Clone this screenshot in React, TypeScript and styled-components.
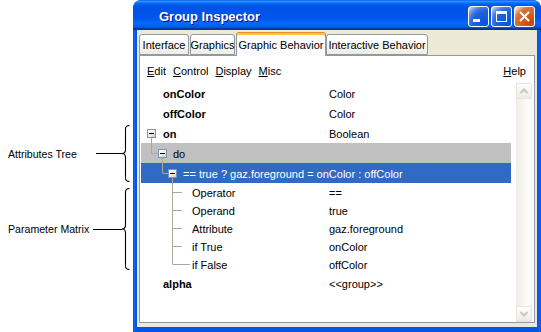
import React from 'react';
import styled, { createGlobalStyle } from 'styled-components';

const GlobalStyle = createGlobalStyle`
  html, body { margin: 0; padding: 0; background: #fff; }
  body { font-family: "Liberation Sans", Arial, sans-serif; font-size: 11px; color: #000; }
  * { box-sizing: border-box; }
`;

const Page = styled.div`
  display: flex;
  width: 541px;
  height: 332px;
  overflow: hidden;
`;

/* ---------- annotations ---------- */
const Annotations = styled.div`
  width: 133px;
  flex: none;
  display: flex;
  flex-direction: column;
  padding: 125px 3px 0 8px;
`;

const Callout = styled.div<{ $h: number; $gap: number }>`
  display: flex;
  align-items: center;
  height: ${(p) => p.$h}px;
  margin-top: ${(p) => p.$gap}px;
`;

const CalloutLabel = styled.span`
  font-size: 10.6px;
  white-space: nowrap;
`;

const Leader = styled.div<{ $w: number }>`
  margin-left: auto;
  width: ${(p) => p.$w}px;
  border-top: 1px solid #000;
`;

const Brace = ({ h }: { h: number }) => {
  const m = h / 2;
  return (
    <svg width="8" height={h} style={{ display: 'block', flex: 'none' }}>
      <path
        d={`M7.5,0.5 Q3.5,0.5 3.5,4 L3.5,${m - 4} Q3.5,${m} 0,${m} Q3.5,${m} 3.5,${m + 4} L3.5,${h - 4} Q3.5,${h - 0.5} 7.5,${h - 0.5}`}
        fill="none"
        stroke="#000"
        strokeWidth="1.1"
      />
    </svg>
  );
};

/* ---------- window frame ---------- */
const Window = styled.div`
  width: 408px;
  height: 332px;
  flex: none;
  display: flex;
  flex-direction: column;
  background: linear-gradient(to right, #0831d9 0, #166aee 1px, #0055ea 3px, #0055ea calc(100% - 3px), #166aee calc(100% - 1px), #0831d9 100%);
  border-radius: 8px 8px 0 0;
  overflow: hidden;
`;

const TitleBar = styled.div`
  height: 30px;
  flex: none;
  display: flex;
  align-items: center;
  padding: 2px 6px 0 26px;
  background: linear-gradient(
    to bottom,
    #0058ee 0%, #3593ff 4%, #288eff 6%, #127dff 8%, #036ffc 10%, #0262ee 14%,
    #0057e5 20%, #0054e3 24%, #0055eb 56%, #005bf5 66%, #026afe 76%, #0062ef 86%,
    #0052d6 92%, #0040ab 94%, #003092 100%
  );
  border-radius: 8px 8px 0 0;
`;

const Title = styled.span`
  flex: 1;
  font-family: "Liberation Sans", Arial, sans-serif;
  font-weight: bold;
  font-size: 13px;
  color: #fff;
  text-shadow: 1px 1px #0f1089;
  white-space: nowrap;
`;

const CapButtons = styled.div`
  display: flex;
  gap: 2px;
`;

const CapButton = styled.div<{ $close?: boolean }>`
  width: 21px;
  height: 21px;
  border: 1px solid #fff;
  border-radius: 3px;
  display: flex;
  align-items: center;
  justify-content: center;
  background: ${(p) =>
    p.$close
      ? 'radial-gradient(circle at 90% 90%, #cc4600 0%, #dc6527 55%, #cd7546 70%, #ffccb2 90%, #fff 100%)'
      : 'radial-gradient(circle at 90% 90%, #0054e9 0%, #2263d5 55%, #4479e4 70%, #a3bbec 90%, #fff 100%)'};
`;

const Body = styled.div`
  flex: 1;
  margin: 0 4px 5px 4px;
  background: #ece9d8;
  display: flex;
  flex-direction: column;
  padding: 0 2px 4px 2px;
`;

/* ---------- tabs ---------- */
const TabStrip = styled.div`
  height: 25px;
  flex: none;
  display: flex;
  align-items: flex-end;
  padding-top: 2px;
`;

const Tab = styled.div<{ $w: number; $active?: boolean }>`
  width: ${(p) => p.$w}px;
  height: ${(p) => (p.$active ? 24 : 21)}px;
  margin-bottom: ${(p) => (p.$active ? -1 : 0)}px;
  margin-right: ${(p) => (p.$active ? 0 : 1)}px;
  position: ${(p) => (p.$active ? 'relative' : 'static')};
  z-index: ${(p) => (p.$active ? 1 : 0)};
  display: flex;
  align-items: center;
  justify-content: center;
  font-size: 11px;
  white-space: nowrap;
  border: 1px solid #919b9c;
  border-bottom: ${(p) => (p.$active ? 'none' : '1px solid #919b9c')};
  border-top-color: ${(p) => (p.$active ? '#e68b2c' : '#919b9c')};
  border-radius: 3px 3px 0 0;
  background: ${(p) => (p.$active ? '#fcfcfe' : 'linear-gradient(to bottom, #fff 0%, #fcfcfe 30%, #f4f3ee 70%, #ecebe6 100%)')};
  box-shadow: ${(p) => (p.$active ? 'inset 0 2px 0 #ffc83c' : 'none')};
  padding-top: ${(p) => (p.$active ? 1 : 0)}px;
`;

const Panel = styled.div`
  flex: 1;
  background: #fff;
  border: 1px solid #919b9c;
  display: flex;
  flex-direction: column;
  min-height: 0;
`;

const MenuBar = styled.div`
  height: 18px;
  margin-top: 6px;
  flex: none;
  display: flex;
  align-items: center;
  padding: 0 8px 0 7px;
`;

const MenuItem = styled.span<{ $right?: boolean }>`
  margin-right: ${(p) => (p.$right ? 0 : 7)}px;
  margin-left: ${(p) => (p.$right ? 'auto' : '0')};
  font-size: 11px;
  line-height: 18px;
  & u { text-decoration: underline; text-underline-offset: 1px; }
`;

const ListArea = styled.div`
  flex: 1;
  margin-top: 3px;
  display: flex;
  padding: 0 2px 0 1px;
  min-height: 0;
`;

const Tree = styled.div`
  flex: 1;
  display: flex;
  flex-direction: column;
`;

type Tone = 'none' | 'gray' | 'sel';

const Row = styled.div<{ $h: number; $tone: Tone }>`
  display: flex;
  align-items: center;
  height: ${(p) => p.$h}px;
  line-height: ${(p) => p.$h}px;
  flex: none;
  background: ${(p) => (p.$tone === 'gray' ? '#c0c0c0' : p.$tone === 'sel' ? '#316ac5' : 'transparent')};
  color: ${(p) => (p.$tone === 'sel' ? '#fff' : '#000')};
`;

const Name = styled.div<{ $w?: number; $bold?: boolean }>`
  ${(p) => (p.$w ? `width: ${p.$w}px; flex: none;` : 'flex: 1;')}
  font-weight: ${(p) => (p.$bold ? 'bold' : 'normal')};
  font-size: 11px;
  white-space: nowrap;
  padding-top: 1px;
`;

const Value = styled.div`
  flex: 1;
  font-size: 11px;
  white-space: nowrap;
  padding-top: 1px;
`;

/* ---------- scrollbar ---------- */
const ScrollBar = styled.div`
  width: 16px;
  margin-left: 5px;
  flex: none;
  display: flex;
  flex-direction: column;
  justify-content: space-between;
  background: linear-gradient(to right, #eeede5 0%, #f3f1ea 20%, #fdfdfa 80%, #f6f5f0 100%);
`;

const ScrollButton = styled.div`
  width: 16px;
  height: 16px;
  border: 1px solid #e6e4dc;
  border-radius: 2px;
  background: linear-gradient(to bottom, #fefefd 0%, #f6f5f1 50%, #ebe9e1 100%);
  display: flex;
  align-items: center;
  justify-content: center;
`;

const Chevron = ({ up }: { up?: boolean }) => (
  <svg width="10" height="8" style={{ display: 'block' }}>
    <path d={up ? 'M1.5,6 L5,2.5 L8.5,6' : 'M1.5,2 L5,5.5 L8.5,2'} fill="none" stroke="#c9c7ba" strokeWidth="2" />
  </svg>
);

/* ---------- tree gutter drawing ---------- */
type Seg = [number, number, number, number];

const LINE = '#aca899';

const Gutter = ({ w, h, box, lines = [] }: { w: number; h: number; box?: number; lines?: Seg[] }) => (
  <svg width={w} height={h} style={{ display: 'block', flex: 'none' }}>
    <defs>
      <linearGradient id="exp" x1="0" y1="0" x2="1" y2="1">
        <stop offset="0" stopColor="#ffffff" />
        <stop offset="0.6" stopColor="#ece9e0" />
        <stop offset="1" stopColor="#c8c4b6" />
      </linearGradient>
    </defs>
    {lines.map(([x1, y1, x2, y2], i) => (
      <line key={i} x1={x1 + 0.5} y1={y1 + (y1 === y2 ? 0.5 : 0)} x2={x2 + (x1 === x2 ? 0.5 : 0)} y2={y2 + (y1 === y2 ? 0.5 : 0)} stroke={LINE} strokeWidth="1" />
    ))}
    {box !== undefined && (
      <g>
        <rect x={box + 0.5} y={Math.round(h / 2) - 4 + 0.5} width="8" height="8" fill="url(#exp)" stroke="#7a96b4" strokeWidth="1" />
        <rect x={box + 2} y={Math.round(h / 2)} width="5" height="1" fill="#000" />
      </g>
    )}
  </svg>
);

type RowData = {
  name: string;
  value?: string;
  bold?: boolean;
  h: number;
  gutter: number;
  tone?: Tone;
  box?: number;
  lines?: Seg[];
  span?: boolean;
};

const paramLines: Seg[] = [[31, 0, 31, 18], [31, 9, 41, 9]];

const rows: RowData[] = [
  { name: 'onColor', value: 'Color', bold: true, h: 20, gutter: 22 },
  { name: 'offColor', value: 'Color', bold: true, h: 20, gutter: 22 },
  { name: 'on', value: 'Boolean', bold: true, h: 20, gutter: 22, box: 6, lines: [[10, 14, 10, 20]] },
  { name: 'do', h: 20, gutter: 32, tone: 'gray', box: 17, lines: [[10, 0, 10, 10], [10, 10, 17, 10], [21, 14, 21, 20]] },
  {
    name: '== true ? gaz.foreground = onColor : offColor',
    h: 20,
    gutter: 42,
    tone: 'sel',
    span: true,
    box: 27,
    lines: [[21, 0, 21, 10], [21, 10, 27, 10], [31, 14, 31, 20]],
  },
  { name: 'Operator', value: '==', h: 18, gutter: 51, lines: paramLines },
  { name: 'Operand', value: 'true', h: 18, gutter: 51, lines: paramLines },
  { name: 'Attribute', value: 'gaz.foreground', h: 18, gutter: 51, lines: paramLines },
  { name: 'if True', value: 'onColor', h: 18, gutter: 51, lines: paramLines },
  { name: 'if False', value: 'offColor', h: 18, gutter: 51, lines: [[31, 0, 31, 9], [31, 9, 49, 9]] },
  { name: 'alpha', value: '<<group>>', bold: true, h: 20, gutter: 22 },
];

const NAME_COL = 188;

const tabs = [
  { label: 'Interface', w: 50 },
  { label: 'Graphics', w: 45 },
  { label: 'Graphic Behavior', w: 90, active: true },
  { label: 'Interactive Behavior', w: 102 },
];

export default function App() {
  return (
    <>
      <GlobalStyle />
      <Page>
        <Annotations>
          <Callout $h={57} $gap={0}>
            <CalloutLabel>Attributes Tree</CalloutLabel>
            <Leader $w={26} />
            <Brace h={57} />
          </Callout>
          <Callout $h={82} $gap={6}>
            <CalloutLabel>Parameter Matrix</CalloutLabel>
            <Leader $w={29} />
            <Brace h={82} />
          </Callout>
        </Annotations>

        <Window>
          <TitleBar>
            <Title>Group Inspector</Title>
            <CapButtons>
              <CapButton>
                <svg width="19" height="19" style={{ display: 'block' }}>
                  <rect x="4" y="12" width="7" height="3" fill="#fff" />
                </svg>
              </CapButton>
              <CapButton>
                <svg width="19" height="19" style={{ display: 'block' }}>
                  <rect x="4.5" y="4.5" width="10" height="10" fill="none" stroke="#fff" strokeWidth="1" />
                  <rect x="4" y="4" width="11" height="3" fill="#fff" />
                </svg>
              </CapButton>
              <CapButton $close>
                <svg width="19" height="19" style={{ display: 'block' }}>
                  <path d="M5,5 L14,14 M14,5 L5,14" stroke="#fff" strokeWidth="2" />
                </svg>
              </CapButton>
            </CapButtons>
          </TitleBar>

          <Body>
            <TabStrip>
              {tabs.map((t) => (
                <Tab key={t.label} $w={t.w} $active={t.active}>
                  {t.label}
                </Tab>
              ))}
            </TabStrip>
            <Panel>
              <MenuBar>
                <MenuItem><u>E</u>dit</MenuItem>
                <MenuItem><u>C</u>ontrol</MenuItem>
                <MenuItem><u>D</u>isplay</MenuItem>
                <MenuItem><u>M</u>isc</MenuItem>
                <MenuItem $right><u>H</u>elp</MenuItem>
              </MenuBar>
              <ListArea>
                <Tree>
                  {rows.map((r, i) => (
                    <Row key={i} $h={r.h} $tone={r.tone ?? 'none'}>
                      <Gutter w={r.gutter} h={r.h} box={r.box} lines={r.lines} />
                      {r.span ? (
                        <Name $bold={r.bold}>{r.name}</Name>
                      ) : (
                        <>
                          <Name $w={NAME_COL - r.gutter} $bold={r.bold}>{r.name}</Name>
                          <Value>{r.value ?? ''}</Value>
                        </>
                      )}
                    </Row>
                  ))}
                </Tree>
                <ScrollBar>
                  <ScrollButton><Chevron up /></ScrollButton>
                  <ScrollButton><Chevron /></ScrollButton>
                </ScrollBar>
              </ListArea>
            </Panel>
          </Body>
        </Window>
      </Page>
    </>
  );
}
